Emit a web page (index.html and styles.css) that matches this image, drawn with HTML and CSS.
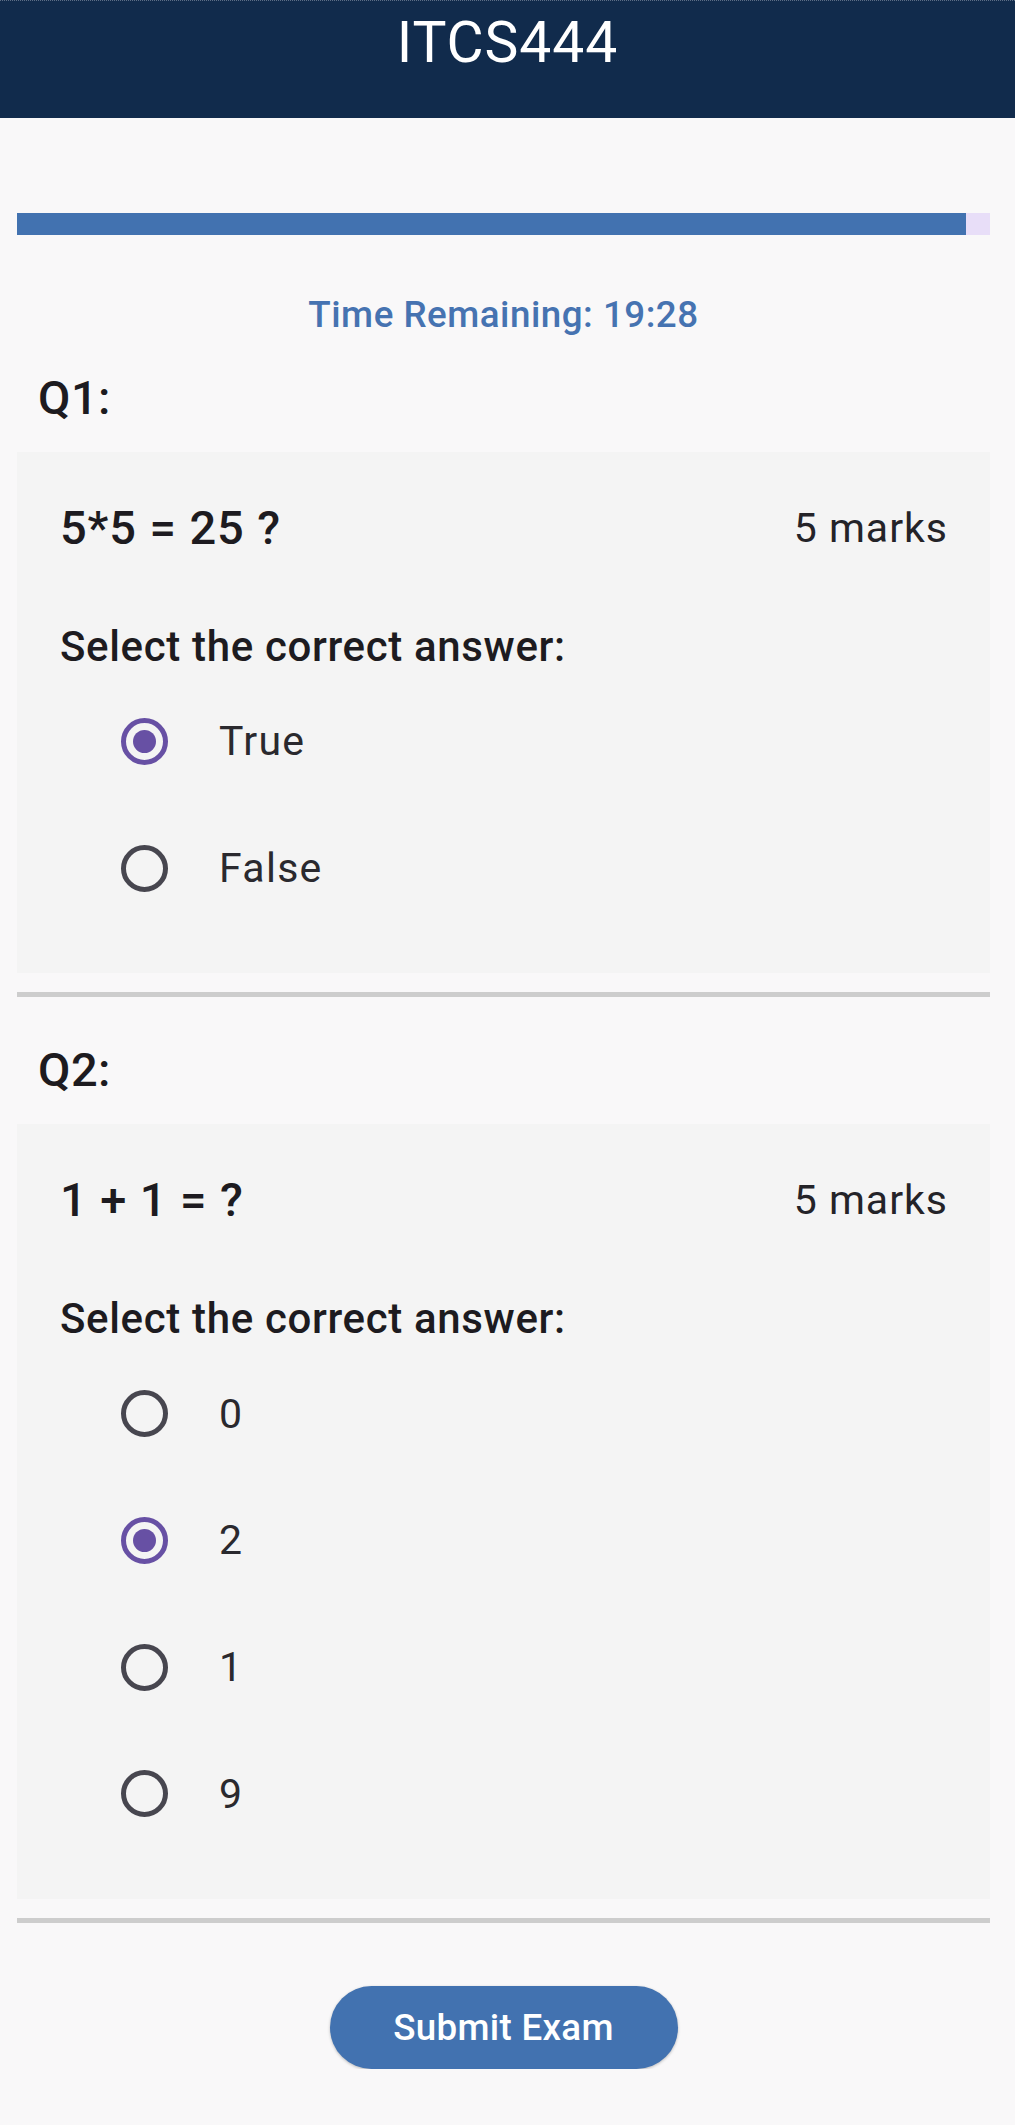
FILE: index.html
```html
<!DOCTYPE html>
<html lang="en">
<head>
<meta charset="utf-8">
<title>ITCS444</title>
<link rel="stylesheet" href="styles.css">
</head>
<body>
<header class="appbar">
  <h1 class="appbar-title">ITCS444</h1>
</header>
<main class="page">
  <div class="progress"><div class="progress-fill" style="width:97.5%"></div></div>
  <p class="timer">Time Remaining: 19:28</p>

  <section class="question">
    <h2 class="q-label">Q1:</h2>
    <div class="card">
      <div class="q-head">
        <span class="q-text">5*5 = 25 ?</span>
        <span class="q-marks">5 marks</span>
      </div>
      <p class="q-prompt">Select the correct answer:</p>
      <ul class="options">
        <li class="option selected"><span class="radio"></span><span class="option-text">True</span></li>
        <li class="option"><span class="radio"></span><span class="option-text">False</span></li>
      </ul>
    </div>
  </section>
  <hr class="divider">

  <section class="question">
    <h2 class="q-label">Q2:</h2>
    <div class="card">
      <div class="q-head">
        <span class="q-text">1 + 1 = ?</span>
        <span class="q-marks">5 marks</span>
      </div>
      <p class="q-prompt">Select the correct answer:</p>
      <ul class="options">
        <li class="option"><span class="radio"></span><span class="option-text">0</span></li>
        <li class="option selected"><span class="radio"></span><span class="option-text">2</span></li>
        <li class="option"><span class="radio"></span><span class="option-text">1</span></li>
        <li class="option"><span class="radio"></span><span class="option-text">9</span></li>
      </ul>
    </div>
  </section>
  <hr class="divider">

  <div class="actions">
    <button class="submit" type="button">Submit Exam</button>
  </div>
</main>
</body>
</html>
```

FILE: styles.css
```css
html, body {
  margin: 0;
  padding: 0;
}

body {
  background: #f9f8f9;
  font-family: Roboto, "Noto Sans", "Liberation Sans", sans-serif;
  color: #1d1b20;
}

.appbar {
  box-sizing: border-box;
  height: 118px;
  background: #112b4c;
  border-top: 1px dotted #5d6e86;
  padding-top: 8px;
  display: flex;
  justify-content: center;
  align-items: flex-start;
}

.appbar-title {
  margin: 0;
  font-size: 57px;
  font-weight: 400;
  line-height: 68px;
  letter-spacing: 0.9px;
  color: #ffffff;
}

.page {
  padding: 0 25px 0 17px;
}

.progress {
  margin-top: 95px;
  height: 22px;
  background: #e8def8;
}

.progress-fill {
  height: 100%;
  background: #4272b0;
}

.timer {
  margin: 55px 0 0;
  text-align: center;
  font-size: 36.75px;
  font-weight: 500;
  line-height: 50px;
  letter-spacing: 0.5px;
  color: #4673b1;
}

.q-label {
  margin: 30px 0 0;
  padding-left: 21px;
  font-size: 47px;
  font-weight: 500;
  line-height: 56px;
  letter-spacing: 0.5px;
}

.divider + .question .q-label {
  margin-top: 45px;
}

.card {
  margin-top: 26px;
  background: #f4f4f4;
  padding: 48px 42px 42px 43px;
}

.q-head {
  display: flex;
  justify-content: space-between;
  align-items: center;
  height: 56px;
}

.q-text {
  font-size: 47px;
  font-weight: 500;
  line-height: 56px;
  letter-spacing: 0.9px;
}

.q-marks {
  font-size: 41px;
  font-weight: 400;
  line-height: 56px;
  letter-spacing: 1px;
  color: #242328;
}

.q-prompt {
  margin: 66px 0 0;
  font-size: 42px;
  font-weight: 500;
  line-height: 50px;
  letter-spacing: 0.65px;
}

.options {
  list-style: none;
  margin: 6px 0 0;
  padding: 0;
}

.option {
  height: 126.7px;
  display: flex;
  align-items: center;
  padding-left: 61px;
}

.radio {
  flex: none;
  box-sizing: border-box;
  width: 47px;
  height: 47px;
  border: 5px solid #47464f;
  border-radius: 50%;
  display: flex;
  align-items: center;
  justify-content: center;
}

.option.selected .radio {
  border-color: #6750a4;
}

.option.selected .radio::after {
  content: "";
  width: 23px;
  height: 23px;
  border-radius: 50%;
  background: #6750a4;
}

.option-text {
  margin-left: 51px;
  font-size: 41px;
  line-height: 56px;
  letter-spacing: 1.3px;
  color: #2a292e;
}

.divider {
  margin: 19px 0 0;
  border: 0;
  height: 5px;
  background: #cdcdcd;
}

.actions {
  display: flex;
  justify-content: center;
  margin-top: 63px;
}

.submit {
  width: 348px;
  height: 83px;
  border: 0;
  border-radius: 42px;
  background: #4272b0;
  color: #ffffff;
  font-family: inherit;
  font-size: 36.75px;
  font-weight: 500;
  letter-spacing: 0.3px;
  box-shadow: 0 1px 3px rgba(0, 0, 0, 0.25);
}
```
